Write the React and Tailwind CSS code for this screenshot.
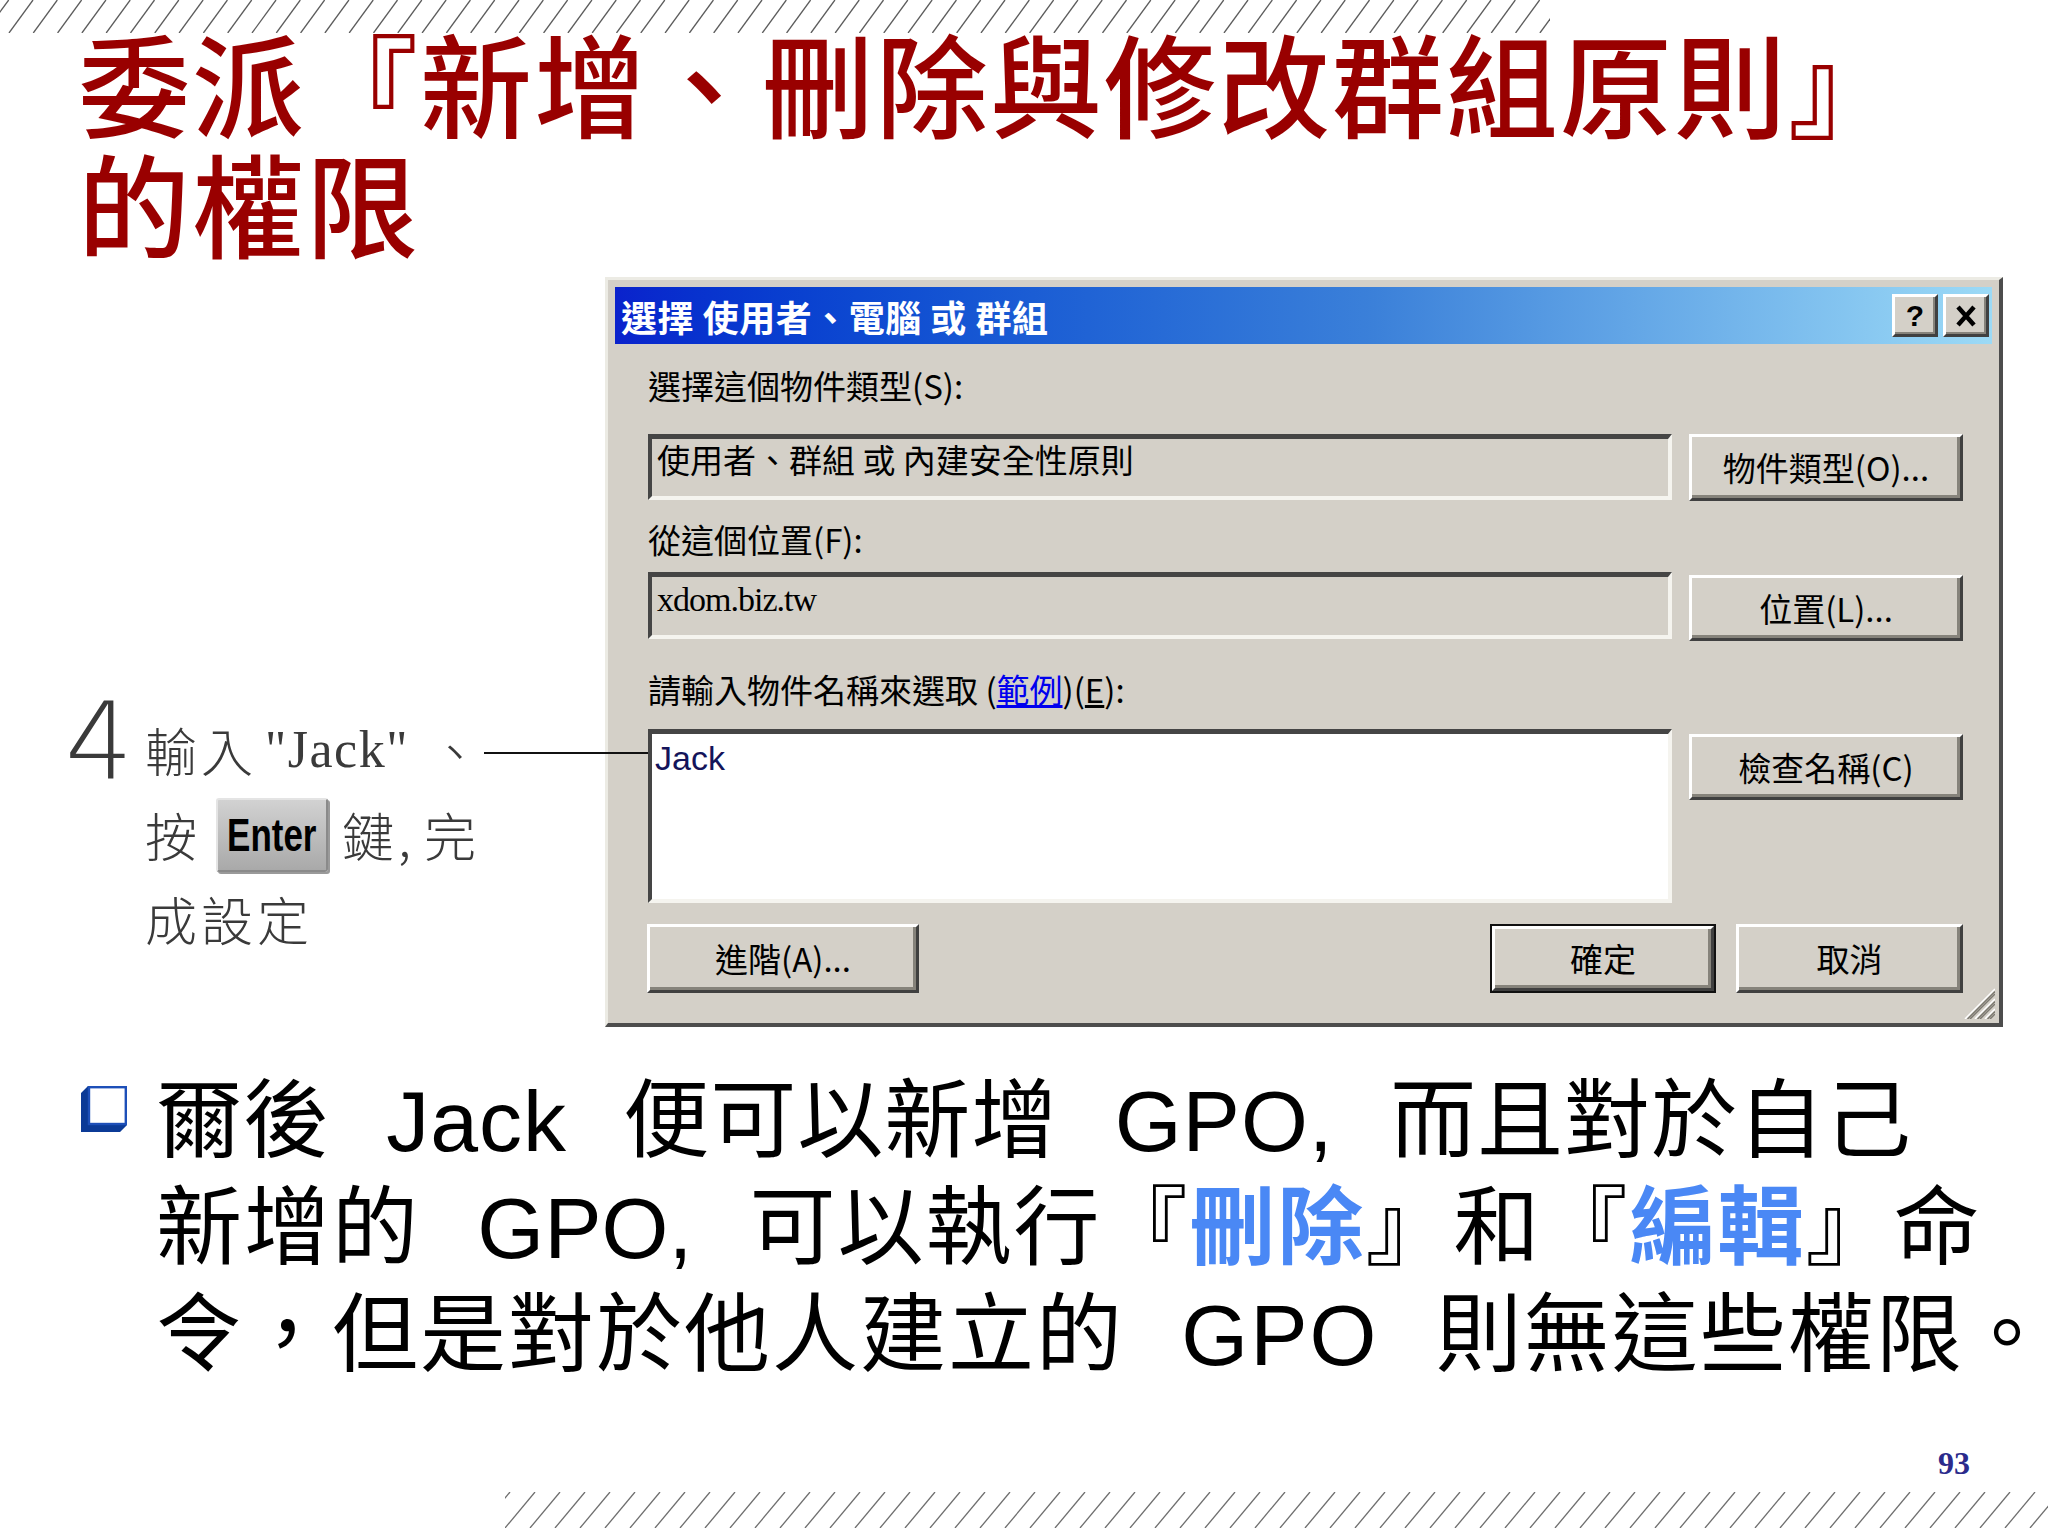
import React from 'react';

// diagonal hatch strip used at the top and bottom of the slide
function Hatch({ width, height, step, start, slant, color }) {
  const count = Math.ceil((width - start) / step) + 3;
  return (
    <svg width={width} height={height} className="block">
      {Array.from({ length: count }, (_, i) => {
        const x = start + (i - 1) * step;
        return <line key={i} x1={x} y1={height} x2={x + slant} y2={0} stroke={color} strokeWidth="1.3" />;
      })}
    </svg>
  );
}

function RaisedButton({ className = '', children }) {
  return (
    <div className={`flex items-center justify-center bg-[#d4d0c8] border-[3px] border-t-white border-l-white border-r-[#404040] border-b-[#404040] shadow-[inset_-3px_-3px_0_#86837b] text-[33px] leading-none text-black ${className}`}>
      {children}
    </div>
  );
}

function Sunken({ className = '', children }) {
  return (
    <div className={`border-[4px] border-t-[5px] border-t-[#454545] border-l-[#454545] border-r-[#f5f4ef] border-b-[#f5f4ef] ${className}`}>
      {children}
    </div>
  );
}

function TitleBtn({ children }) {
  return (
    <div className="w-[46px] h-[43px] flex items-center justify-center bg-[#d4d0c8] border-[3px] border-t-white border-l-white border-r-[#404040] border-b-[#404040] shadow-[inset_-2px_-2px_0_#86837b]">
      {children}
    </div>
  );
}

function Dialog() {
  return (
    <div className="relative w-[1398px] h-[750px] shrink-0 flex flex-col bg-[#d4d0c8] p-[7px] border-t-[3px] border-l-[3px] border-r-[4px] border-b-[4px] border-t-[#ecebe4] border-l-[#ecebe4] border-r-[#4d4d4d] border-b-[#4d4d4d]">
      {/* title bar */}
      <div className="h-[57px] shrink-0 flex items-center justify-between pl-[6px] pr-[3px] bg-linear-to-r from-[#0a22cc] via-[#3b80d9] via-55% to-[#9cdaf6]">
        <span className="text-[36px] font-bold text-white leading-none tracking-[0.5px]">選擇 使用者、電腦 或 群組</span>
        <div className="flex gap-[5px]">
          <TitleBtn>
            <span className="font-['Liberation_Sans',sans-serif] font-bold text-[30px] leading-none text-black">?</span>
          </TitleBtn>
          <TitleBtn>
            <svg width="20" height="22" viewBox="0 0 20 22">
              <path d="M2 2 L18 20 M18 2 L2 20" stroke="#000" strokeWidth="4.5" />
            </svg>
          </TitleBtn>
        </div>
      </div>

      {/* body */}
      <div className="pl-[33px] pr-[29px] pt-[21px] text-black">
        <div className="h-[40px] leading-[40px] text-[33px]">選擇這個物件類型(S):</div>
        <div className="mt-[29px] flex gap-[17px]">
          <Sunken className="w-[1024px] h-[66px] bg-[#d4d0c8] pl-[5px]">
            <div className="text-[33px] leading-[40px]">使用者、群組 或 內建安全性原則</div>
          </Sunken>
          <RaisedButton className="w-[274px] h-[67px]">物件類型(O)...</RaisedButton>
        </div>

        <div className="mt-[18px] h-[40px] leading-[40px] text-[33px]">從這個位置(F):</div>
        <div className="mt-[13px] flex gap-[17px]">
          <Sunken className="w-[1024px] h-[67px] bg-[#d4d0c8] pl-[5px] pt-[3px]">
            <div className="font-['Liberation_Serif',serif] text-[34px] leading-[40px] tracking-[-1px]">xdom.biz.tw</div>
          </Sunken>
          <RaisedButton className="mt-[3px] w-[274px] h-[66px]">位置(L)...</RaisedButton>
        </div>

        <div className="mt-[28px] h-[40px] leading-[40px] text-[33px]">
          請輸入物件名稱來選取 (<span className="text-[#0000ee] underline">範例</span>)(<span className="underline">E</span>):
        </div>
        <div className="mt-[20px] flex gap-[17px]">
          <Sunken className="w-[1024px] h-[174px] bg-white pl-[3px] pt-[4px]">
            <div className="font-['Liberation_Sans',sans-serif] text-[34px] leading-[40px] text-[#14145a]">Jack</div>
          </Sunken>
          <RaisedButton className="mt-[5px] w-[274px] h-[66px]">檢查名稱(C)</RaisedButton>
        </div>

        <div className="mt-[21px] flex justify-between">
          <RaisedButton className="w-[272px] h-[69px] -ml-[1px]">進階(A)...</RaisedButton>
          <div className="flex gap-[20px]">
            <div className="w-[226px] h-[69px] border-[2px] border-[#111]">
              <RaisedButton className="w-full h-full">確定</RaisedButton>
            </div>
            <RaisedButton className="w-[227px] h-[69px]">取消</RaisedButton>
          </div>
        </div>
      </div>

      {/* resize grip */}
      <svg width="34" height="34" viewBox="0 0 34 34" className="absolute right-[4px] bottom-[4px]">
        {[4, 14, 24].map((b) => (
          <g key={b}>
            <line x1={b} y1="34" x2="34" y2={b} stroke="#ffffff" strokeWidth="1.5" />
            <line x1={b + 2.5} y1="34" x2="34" y2={b + 2.5} stroke="#7d7a72" strokeWidth="1.5" />
            <line x1={b + 5} y1="34" x2="34" y2={b + 5} stroke="#7d7a72" strokeWidth="1.5" />
          </g>
        ))}
      </svg>
    </div>
  );
}

function Annotation() {
  return (
    <div className="w-[605px] shrink-0 pt-[429px] pl-[65px] flex text-[#3a3a3a]">
      <div className="w-[80px] -mt-[3px] font-['DejaVu_Sans',sans-serif] font-extralight text-[107px] leading-[78px]">4</div>
      <div className="text-[52px] font-light tracking-[4px]">
        <div className="h-[88px] flex items-center">
          <span>輸入</span>
          <span className="ml-[8px] font-['Liberation_Serif',serif] tracking-[1.5px]">"Jack"</span>
          <span className="ml-[20px]">、</span>
        </div>
        <div className="h-[82px] flex items-center">
          <span>按</span>
          <span className="ml-[15px] w-[112px] h-[74px] flex items-center justify-center rounded-[3px] bg-linear-to-b from-[#d2d2d2] to-[#a9a9a9] border-[2px] border-t-[#e4e4e4] border-l-[#e4e4e4] border-r-[#8a8a8a] border-b-[#8a8a8a] shadow-[2px_2px_0_#9a9a9a]">
            <span className="font-['Liberation_Sans',sans-serif] font-bold text-[46px] leading-none tracking-normal text-black scale-x-[0.76]">Enter</span>
          </span>
          <span className="ml-[14px]">鍵,</span>
          <span className="ml-[9px]">完</span>
        </div>
        <div className="h-[85px] flex items-center">
          <span>成設定</span>
        </div>
      </div>
    </div>
  );
}

function Bullet() {
  return (
    <svg width="46" height="46" viewBox="0 0 46 46" className="shrink-0 mt-[26px]">
      <polygon points="7,0 0,7 0,46 39,46 46,39 7,39" fill="#0b3a96" />
      <rect x="8" y="1.2" width="36.8" height="36.8" fill="#ffffff" stroke="#1d4fb8" strokeWidth="2.4" />
    </svg>
  );
}

export default function App() {
  const latin = "font-['Liberation_Sans',sans-serif] leading-[80px]";
  return (
    <div className="relative w-[2048px] h-[1536px] overflow-hidden bg-white font-['Noto_Sans_CJK_TC','Noto_Sans',sans-serif]">
      <Hatch width={1550} height={33} step={24.3} start={9} slant={24} color="#5c5c5c" />

      <h1 className="-mt-[12px] pl-[78px] text-[112px] leading-[120px] font-medium tracking-[2px] text-[#990000]">
        <div>委派『新增、刪除與修改群組原則』</div>
        <div>的權限</div>
      </h1>

      <div className="relative mt-[16px] flex">
        <Annotation />
        <Dialog />
        {/* leader line from the note to the name box */}
        <div className="absolute left-[484px] top-[475px] w-[164px] h-[2px] bg-[#111] z-10" />
      </div>

      <div className="mt-[33px] pl-[81px] flex">
        <Bullet />
        <div className="ml-[29px] text-[86px] leading-[107px] text-black whitespace-nowrap [word-spacing:36px]">
          <div className="tracking-[1px]">
            爾後 <span className={latin}>Jack</span> 便可以新增 <span className={latin}>GPO,</span> 而且對於自己
          </div>
          <div className="tracking-[2px]">
            新增的 <span className={`${latin} tracking-[0px]`}>GPO,</span> 可以執行『<span className="font-bold text-[#4a88f5]">刪除</span>』和『<span className="font-bold text-[#4a88f5]">編輯</span>』命
          </div>
          <div className="tracking-[2px]">
            令，但是對於他人建立的 <span className={latin}>GPO</span> 則無這些權限。
          </div>
        </div>
      </div>

      <div className="mt-[62px] pr-[78px] text-right font-['Liberation_Serif',serif] font-bold text-[32px] leading-[40px] text-[#2b2b8c]">93</div>

      <div className="mt-[9px] pl-[505px]">
        <Hatch width={1543} height={36} step={25} start={0} slant={30} color="#6e6e6e" />
      </div>
    </div>
  );
}
